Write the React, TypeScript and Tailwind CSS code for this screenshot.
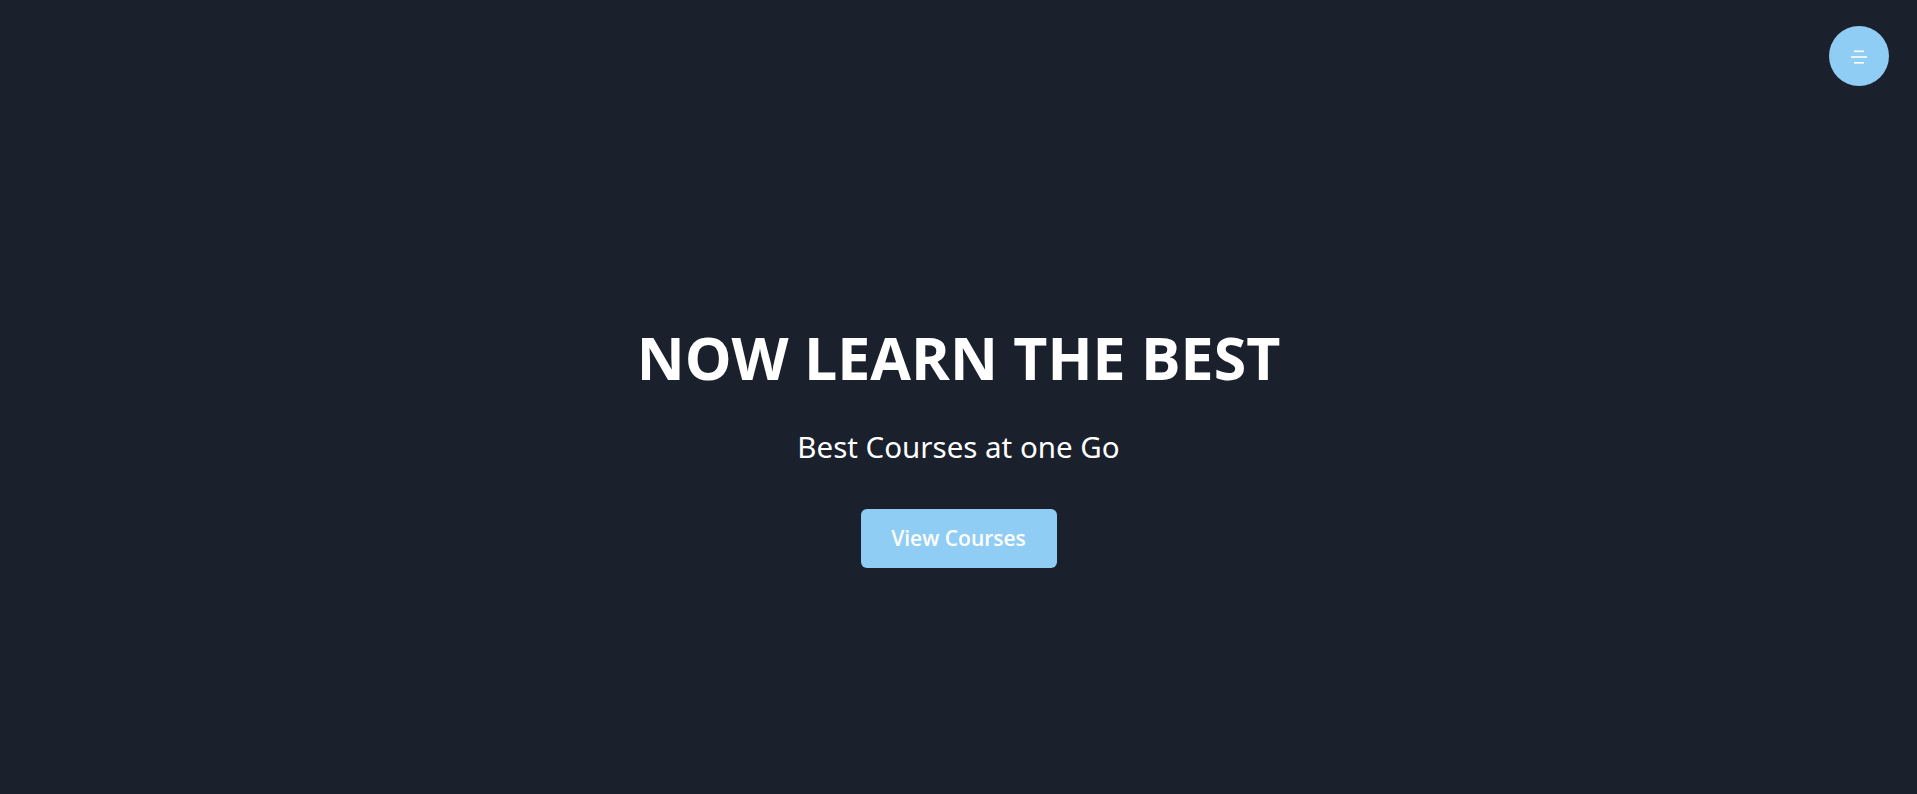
import React from "react";

export default function App() {
  return (
    <div className="min-h-[794px] w-full bg-[#1a202c] flex flex-col">
      <div className="flex justify-end pt-[26px] pr-[28px]">
        <button className="w-[60px] h-[60px] rounded-full bg-[#90cdf4] flex items-center justify-center">
          <svg width="20" height="16" viewBox="0 0 20 16">
            <rect x="5" y="2.5" width="10" height="1.6" fill="#ffffff" />
            <rect x="2" y="8.2" width="16" height="1.6" fill="#ffffff" />
            <rect x="5" y="14" width="10" height="1.6" fill="#ffffff" />
          </svg>
        </button>
      </div>
      <div className="flex flex-col items-center mt-[235px]">
        <h1 className="text-white text-[59px] leading-[72px] font-bold font-['Open_Sans','Noto_Sans',sans-serif]">
          NOW LEARN THE BEST
        </h1>
        <p className="text-white text-[29.5px] leading-[36px] mt-[36px] font-['Noto_Sans',sans-serif]">
          Best Courses at one Go
        </p>
        <button className="mt-[44px] h-[59px] w-[196px] rounded-[6px] bg-[#90cdf4] text-white text-[21px] font-semibold font-['Open_Sans','Noto_Sans',sans-serif]">
          View Courses
        </button>
      </div>
    </div>
  );
}
